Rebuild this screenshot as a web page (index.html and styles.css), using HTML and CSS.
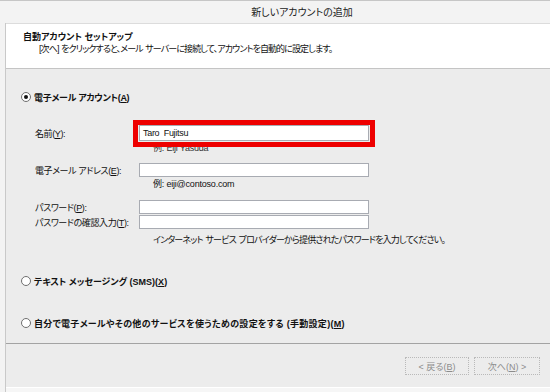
FILE: index.html
```html
<!DOCTYPE html>
<html lang="ja">
<head>
  <meta charset="UTF-8" />
  <title>新しいアカウントの追加</title>
  <link rel="stylesheet" href="styles.css">
</head>
<body>
  <div class="window">
    <div class="titlebar">新しいアカウントの追加</div>

    <div class="frame">
      <div class="header">
        <div class="header-title">自動アカウント セットアップ</div>
        <div class="header-sub">[次へ] をクリックすると、メール サーバーに接続して、アカウントを自動的に設定します。</div>
      </div>

      <div class="content">
        <div class="radio-row first">
          <span class="radio checked"></span>
          <span class="radio-label tight">電子メール アカウント(<u>A</u>)</span>
        </div>

        <div class="form">
          <label class="field-label name-label">名前(<u>Y</u>):</label>
          <div class="field marked">
            <div class="input name-input">Taro  Fujitsu</div>
          </div>
          <div class="hint hint-name">例: Eiji Yasuda</div>

          <label class="field-label mail-label">電子メール アドレス(<u>E</u>):</label>
          <div class="field mail-field">
            <div class="input"></div>
          </div>
          <div class="hint">例: eiji@contoso.com</div>

          <label class="field-label pw-label">パスワード(<u>P</u>):</label>
          <div class="field pw-field">
            <div class="input"></div>
          </div>
          <label class="field-label pw2-label">パスワードの確認入力(<u>T</u>):</label>
          <div class="field pw2-field">
            <div class="input"></div>
          </div>
          <div class="hint note">インターネット サービス プロバイダーから提供されたパスワードを入力してください。</div>
        </div>

        <div class="radio-row spaced">
          <span class="radio"></span>
          <span class="radio-label">テキスト メッセージング (SMS)(<u>X</u>)</span>
        </div>

        <div class="radio-row spaced">
          <span class="radio"></span>
          <span class="radio-label wide">自分で電子メールやその他のサービスを使うための設定をする (手動設定)(<u>M</u>)</span>
        </div>
      </div>

      <div class="footer">
        <button class="btn" disabled>&lt; 戻る(<u>B</u>)</button>
        <button class="btn" disabled>次へ(<u>N</u>) &gt;</button>
      </div>
      <div class="bottom-strip"></div>
    </div>
  </div>
</body>
</html>
```

FILE: styles.css
```css
* {
  margin: 0; padding: 0; box-sizing: border-box;
}
body {
  font-family: "Liberation Sans", "Noto Sans CJK JP", sans-serif;
  font-size: 9px;
  font-feature-settings: "palt";
  color: #111;
  background: #fff;
}
u {
  text-decoration: underline;
  text-underline-offset: 1px;
}
.window {
  width: 550px;
  height: 392px;
  border-top: 1px solid #c6c6c6;
  background: #f3f3f3;
  display: flex;
  flex-direction: column;
}
.titlebar {
  height: 22px;
  line-height: 24px;
  padding-left: 54px;
  text-align: center;
  font-size: 10px;
  color: #222;
}
.frame {
  flex: 1;
  margin-left: 5px;
  border-left: 1px solid #c9c9c9;
  display: flex;
  flex-direction: column;
}

/* header */
.header {
  height: 46px;
  background: #fff;
  border-top: 1px solid #dcdcdc;
  border-bottom: 1px solid #c4c4c4;
  padding: 7px 0 0 17px;
}
.header-title {
  font-weight: bold;
  line-height: 12px;
}
.header-sub {
  line-height: 12px;
  padding-left: 16px;
  letter-spacing: -0.9px;
  word-spacing: 1px;
  white-space: nowrap;
}

/* content */
.content {
  height: 274px;
  background: #ececec;
  padding-left: 15px;
}
.radio-row {
  display: flex;
  align-items: center;
  gap: 3px;
  height: 14px;
}
.radio-row.first {
  margin-top: 21px;
}
.radio-row.spaced {
  margin-top: 28px;
}
.radio-label {
  font-weight: bold;
  white-space: nowrap;
}
.radio-label.tight {
  letter-spacing: -0.3px;
}
.radio-label.wide {
  letter-spacing: 0.3px;
}
.radio {
  width: 10px;
  height: 10px;
  border: 1px solid #6f6f6f;
  border-radius: 50%;
  background: #fff;
  display: flex;
  align-items: center;
  justify-content: center;
}
.radio.checked::after {
  content: "";
  width: 4px;
  height: 4px;
  border-radius: 50%;
  background: #111;
}

.form {
  display: grid;
  grid-template-columns: 104px 230px;
  align-items: center;
  padding-left: 14px;
  margin-top: 21px;
}
.field-label {
  grid-column: 1;
  white-space: nowrap;
  letter-spacing: -0.4px;
}
.field {
  grid-column: 2;
  position: relative;
}
.input {
  height: 14px;
  border: 1px solid #a8abb2;
  background: #fff;
  padding-left: 3px;
  line-height: 12px;
}
.name-input {
  height: 16px;
  line-height: 14px;
  white-space: pre;
  letter-spacing: -0.3px;
}
.marked::after {
  content: "";
  position: absolute;
  top: -5px; left: -6px; right: -6px; bottom: -6px;
  border: 5px solid #ee0000;
}
.hint {
  grid-column: 2;
  line-height: 12px;
  margin-top: 1px;
  padding-left: 14px;
  white-space: nowrap;
  letter-spacing: -0.2px;
}
.hint-name {
  color: #333;
}
.mail-label, .mail-field {
  margin-top: 9px;
}
.pw-label, .pw-field {
  margin-top: 10px;
}
.pw2-label, .pw2-field {
  margin-top: 1px;
}
.note {
  margin-top: 5px;
  letter-spacing: -0.8px;
  word-spacing: 1px;
}

/* footer */
.footer {
  height: 44px;
  border-top: 1px solid #a3a3a3;
  background: #ececec;
  display: flex;
  justify-content: flex-end;
  align-items: flex-start;
  gap: 5px;
  padding: 13px 10px 0 0;
}
.btn {
  font: inherit;
  height: 18px;
  width: 64px;
  border: 1px dotted #b9b9b9;
  background: #ececec;
  color: #8c8c8c;
}
.btn + .btn {
  width: 66px;
}
.bottom-strip {
  flex: 1;
  border-top: 1px solid #fff;
  background: #f6f6f6;
}
```
